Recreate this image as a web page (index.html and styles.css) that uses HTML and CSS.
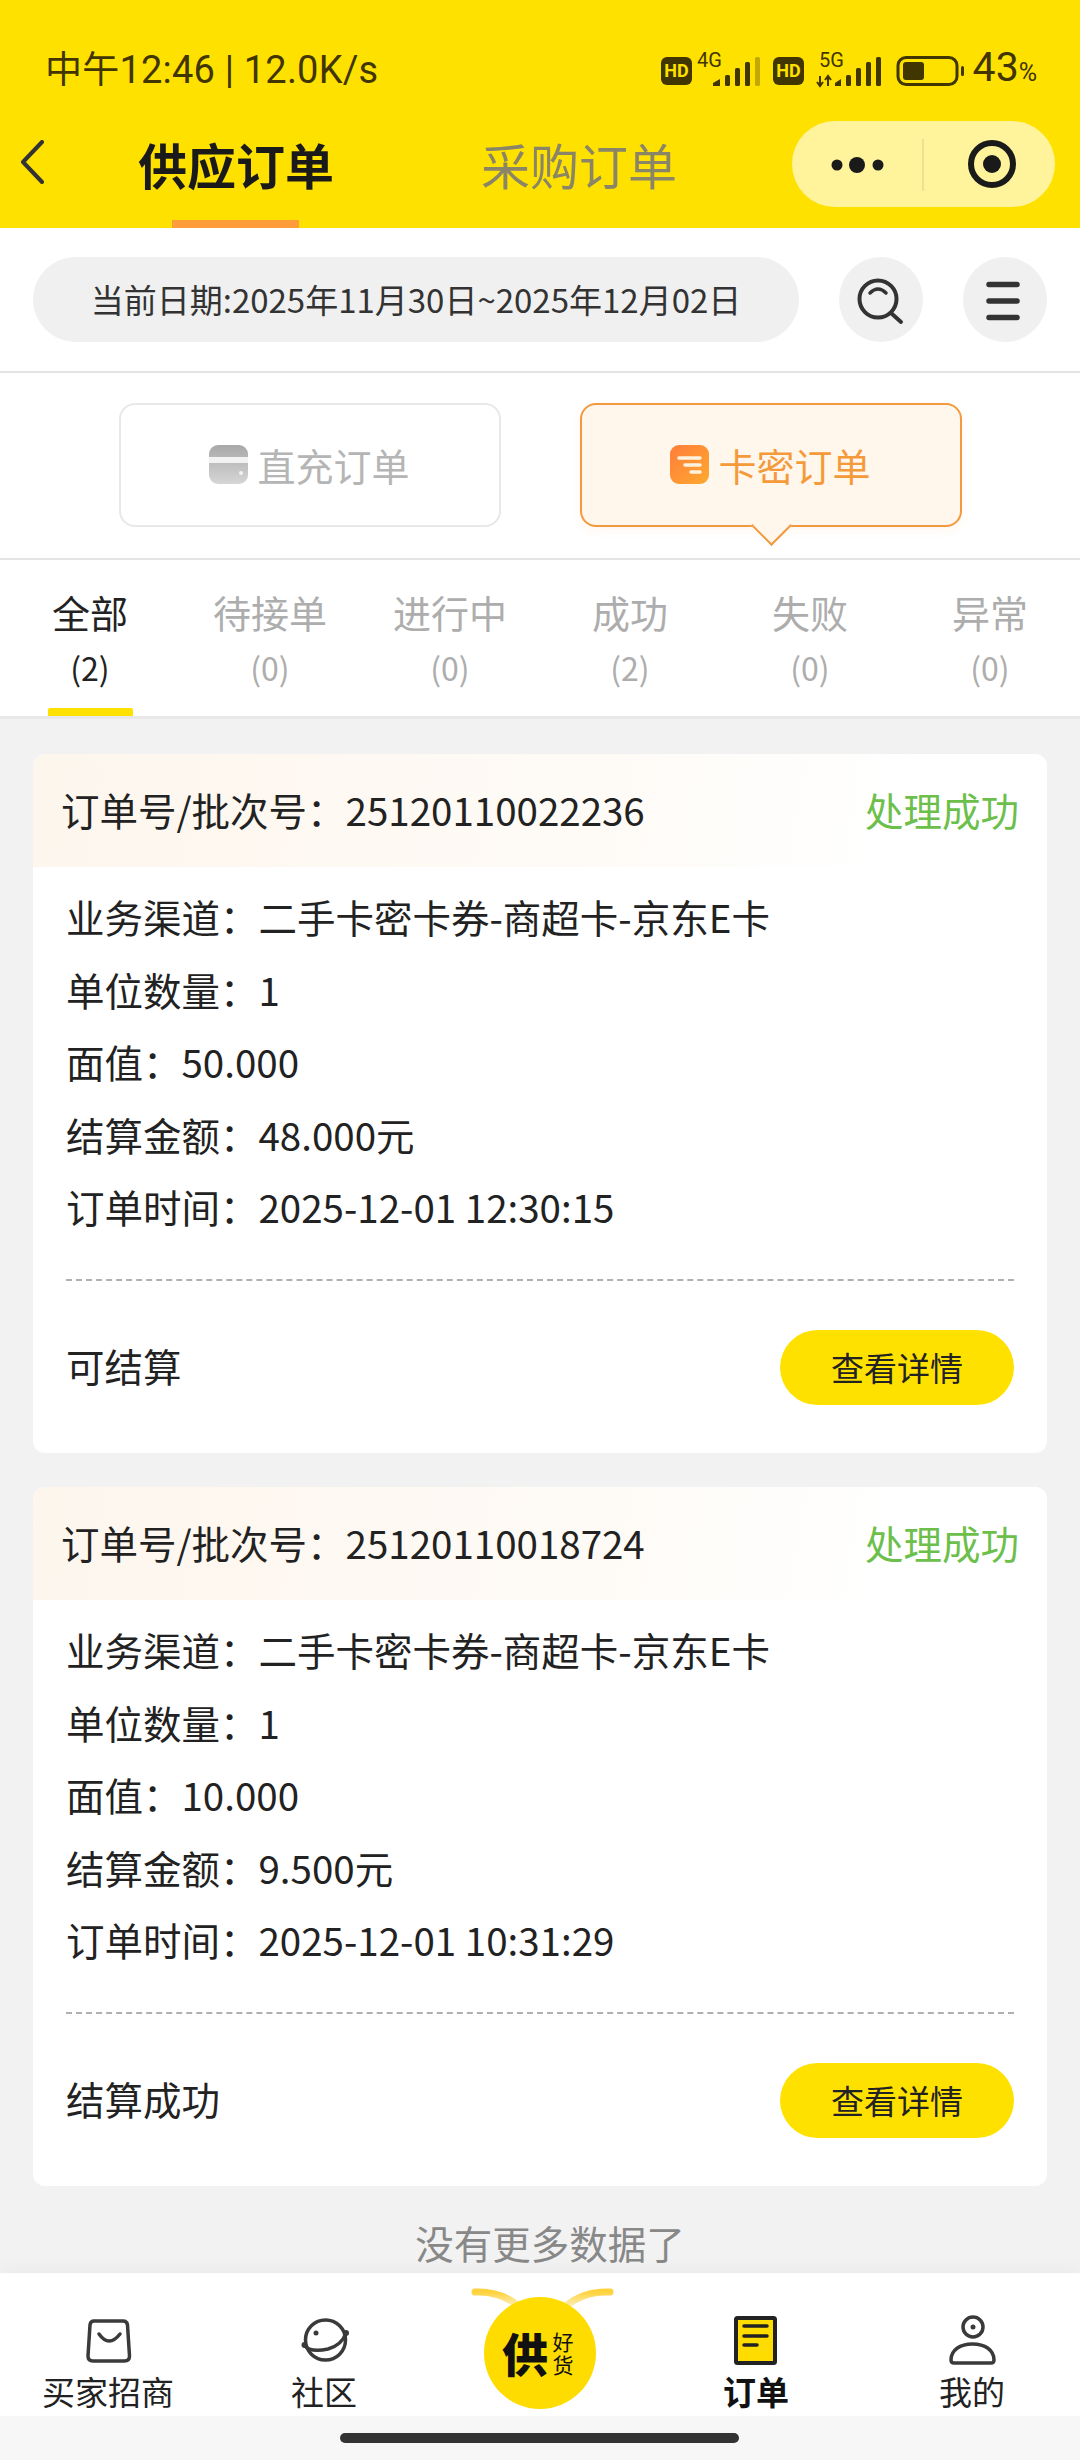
FILE: index.html
```html
<!DOCTYPE html>
<html lang="zh-CN">
<head>
  <meta charset="UTF-8">
  <meta name="viewport" content="width=device-width, initial-scale=1.0">
  <title>供应订单</title>
  <link rel="stylesheet" href="styles.css">
</head>
<body>
  <header class="top">
    <div class="statusbar">
      <span class="clock"><span class="clock-cn">中午</span>12:46 | 12.0K/s</span>
      <div class="status-right">
        <svg class="signal" viewBox="660 42 306 44" width="306" height="44">
          <rect x="661" y="54" width="31" height="28" rx="6" fill="#413500"/>
          <text x="676.5" y="74" class="hd">HD</text>
          <text x="697" y="64" class="net">4G</text>
          <path d="M713 83v-3l7-4v7z" fill="#413500"/>
          <rect x="725" y="72" width="5" height="11" rx="1.5" fill="#413500"/>
          <rect x="735" y="65" width="5" height="18" rx="1.5" fill="#413500"/>
          <rect x="745" y="59" width="5" height="24" rx="1.5" fill="#413500"/>
          <rect x="755" y="54" width="5" height="29" rx="1.5" fill="#c4a800"/>
          <rect x="773" y="54" width="31" height="28" rx="6" fill="#413500"/>
          <text x="788.5" y="74" class="hd">HD</text>
          <text x="819" y="64" class="net">5G</text>
          <path d="M820 73v10M817 79l3 4 3-4M828 83V73M825 77l3-4 3 4" stroke="#413500" stroke-width="2" fill="none"/>
          <path d="M835 83v-3l6-4v7z" fill="#413500"/>
          <rect x="846" y="72" width="5" height="11" rx="1.5" fill="#413500"/>
          <rect x="856" y="65" width="5" height="18" rx="1.5" fill="#413500"/>
          <rect x="866" y="59" width="5" height="24" rx="1.5" fill="#413500"/>
          <rect x="876" y="54" width="5" height="29" rx="1.5" fill="#413500"/>
          <rect x="898" y="54.500" width="59" height="27" rx="8" fill="none" stroke="#413500" stroke-width="3"/>
          <rect x="903" y="59" width="21" height="18" rx="3" fill="#413500"/>
          <rect x="961" y="63" width="3" height="10" rx="1.500" fill="#413500"/>
        </svg>
        <span class="battery">43<small>%</small></span>
      </div>
    </div>
    <nav class="navbar">
      <svg class="back" viewBox="0 0 26 44" width="26" height="44">
        <path d="M23 2L4 22l19 20" fill="none" stroke="#333" stroke-width="4" stroke-linecap="round" stroke-linejoin="round"/>
      </svg>
      <div class="nav-tabs">
        <a class="nav-tab active">供应订单</a>
        <a class="nav-tab">采购订单</a>
      </div>
      <div class="capsule">
        <svg viewBox="0 0 262 86" width="262" height="86">
          <circle cx="45" cy="44" r="5.500" fill="#1a1a1a"/>
          <circle cx="65" cy="44" r="8" fill="#1a1a1a"/>
          <circle cx="86" cy="44" r="5.500" fill="#1a1a1a"/>
          <path d="M131 18v52" stroke="#e8dc8c" stroke-width="1.500"/>
          <circle cx="200" cy="43" r="21" fill="none" stroke="#1a1a1a" stroke-width="6"/>
          <circle cx="200" cy="43" r="9" fill="#1a1a1a"/>
        </svg>
      </div>
    </nav>
  </header>

  <section class="search">
    <div class="date-pill">当前日期:2025年11月30日~2025年12月02日</div>
    <button class="round-btn">
      <svg viewBox="0 0 84 84" width="84" height="84">
        <circle cx="39" cy="41" r="18.500" fill="none" stroke="#333" stroke-width="4"/>
        <path d="M31 35q8-8 16 0" fill="none" stroke="#333" stroke-width="3.500" stroke-linecap="round"/>
        <path d="M52 55l10 9" fill="none" stroke="#333" stroke-width="4" stroke-linecap="round"/>
      </svg>
    </button>
    <button class="round-btn">
      <svg viewBox="0 0 84 84" width="84" height="84">
        <path d="M26 26.500h28M26 43h28M26 59.500h28" fill="none" stroke="#333" stroke-width="5.500" stroke-linecap="round"/>
      </svg>
    </button>
  </section>

  <section class="type-tabs">
    <div class="type-tab">
      <svg viewBox="0 0 39 39" width="39" height="39">
        <defs>
          <linearGradient id="greyCard" x1="0" y1="0" x2="0" y2="1">
            <stop offset="0" stop-color="#a8a8a8"/>
            <stop offset="1" stop-color="#d6d6d6"/>
          </linearGradient>
        </defs>
        <rect width="39" height="39" rx="9" fill="url(#greyCard)"/>
        <rect y="12" width="39" height="6" fill="#f2f2f2"/>
        <circle cx="32" cy="28" r="2" fill="#f2f2f2"/>
      </svg>
      <span>直充订单</span>
    </div>
    <div class="type-tab active">
      <svg viewBox="0 0 39 39" width="39" height="39">
        <defs>
          <linearGradient id="orangeCard" x1="0" y1="0" x2="1" y2="1">
            <stop offset="0" stop-color="#ff7d3c"/>
            <stop offset="1" stop-color="#ffa92e"/>
          </linearGradient>
        </defs>
        <rect width="39" height="39" rx="9" fill="url(#orangeCard)"/>
        <path d="M9 13h21M15 20h15M21 27h9" stroke="#fff3df" stroke-width="3.500" stroke-linecap="round"/>
      </svg>
      <span>卡密订单</span>
    </div>
  </section>

  <section class="status-tabs">
    <div class="status-tab active"><span>全部</span><span class="count">(2)</span><i></i></div>
    <div class="status-tab"><span>待接单</span><span class="count">(0)</span><i></i></div>
    <div class="status-tab"><span>进行中</span><span class="count">(0)</span><i></i></div>
    <div class="status-tab"><span>成功</span><span class="count">(2)</span><i></i></div>
    <div class="status-tab"><span>失败</span><span class="count">(0)</span><i></i></div>
    <div class="status-tab"><span>异常</span><span class="count">(0)</span><i></i></div>
  </section>

  <main class="list">
    <article class="card">
      <div class="card-head">
        <span>订单号/批次号：25120110022236</span>
        <span class="state">处理成功</span>
      </div>
      <div class="card-body">
        <p>业务渠道：二手卡密卡券-商超卡-京东E卡</p>
        <p>单位数量：1</p>
        <p>面值：50.000</p>
        <p>结算金额：48.000元</p>
        <p>订单时间：2025-12-01 12:30:15</p>
      </div>
      <div class="card-foot">
        <span class="settle">可结算</span>
        <button class="detail-btn">查看详情</button>
      </div>
    </article>

    <article class="card">
      <div class="card-head">
        <span>订单号/批次号：25120110018724</span>
        <span class="state">处理成功</span>
      </div>
      <div class="card-body">
        <p>业务渠道：二手卡密卡券-商超卡-京东E卡</p>
        <p>单位数量：1</p>
        <p>面值：10.000</p>
        <p>结算金额：9.500元</p>
        <p>订单时间：2025-12-01 10:31:29</p>
      </div>
      <div class="card-foot">
        <span class="settle">结算成功</span>
        <button class="detail-btn">查看详情</button>
      </div>
    </article>

    <div class="no-more">没有更多数据了</div>
  </main>

  <footer class="tabbar">
    <a class="tab-item">
      <svg viewBox="0 0 56 56" width="56" height="56">
        <path d="M14 9h29q4 0 4.500 4l2 31q0 5-5 5H13q-5 0-5-5l2-31q.5-4 4-4z" fill="none" stroke="#3a3a3a" stroke-width="3.500"/>
        <path d="M19 22q10 14 21 0" fill="none" stroke="#3a3a3a" stroke-width="3.500" stroke-linecap="round"/>
      </svg>
      <span>买家招商</span>
    </a>
    <a class="tab-item">
      <svg viewBox="0 0 56 56" width="56" height="56">
        <circle cx="29.500" cy="28" r="20" fill="none" stroke="#3a3a3a" stroke-width="3.500"/>
        <path d="M8 33Q14 41 32 37Q46 33 50 21" fill="none" stroke="#3a3a3a" stroke-width="3.500"/>
        <circle cx="8.500" cy="33" r="3" fill="#3a3a3a"/>
        <circle cx="50" cy="21" r="3" fill="#3a3a3a"/>
        <circle cx="20" cy="21" r="2.500" fill="#3a3a3a"/>
      </svg>
      <span>社区</span>
    </a>
    <a class="tab-item logo-item">
      <svg viewBox="0 0 150 132" width="150" height="132">
        <defs>
          <linearGradient id="antenna" x1="0" y1="0" x2="0" y2="1">
            <stop offset="0" stop-color="#ffd23c"/>
            <stop offset="1" stop-color="#fbefb8"/>
          </linearGradient>
        </defs>
        <path d="M10 10q26-1 43 14" fill="none" stroke="url(#antenna)" stroke-width="7" stroke-linecap="round"/>
        <path d="M145 10q-26-1-44 14" fill="none" stroke="url(#antenna)" stroke-width="7" stroke-linecap="round"/>
        <circle cx="75" cy="71" r="56" fill="#ffdc00"/>
        <text x="37" y="90" class="logo-big">供</text>
        <text x="98" y="50" class="logo-small">好货</text>
      </svg>
    </a>
    <a class="tab-item active">
      <svg viewBox="0 0 56 56" width="56" height="56">
        <rect x="8" y="6" width="39" height="45" rx="1.500" fill="#ffdc00" stroke="#222" stroke-width="4"/>
        <path d="M16 14h23M16 24h23M16 33h13" stroke="#222" stroke-width="3.500" stroke-linecap="round"/>
      </svg>
      <span>订单</span>
    </a>
    <a class="tab-item">
      <svg viewBox="0 0 56 56" width="56" height="56">
        <circle cx="29" cy="15" r="10" fill="none" stroke="#3a3a3a" stroke-width="3.500"/>
        <circle cx="29" cy="15" r="2.500" fill="#3a3a3a"/>
        <path d="M7 48c0-10 9-16 21.500-16s21.500 6 21.500 16q0 3-3 3H10q-3 0-3-3z" fill="none" stroke="#3a3a3a" stroke-width="3.500"/>
      </svg>
      <span>我的</span>
    </a>
  </footer>

  <div class="home-area"><div class="home-bar"></div></div>
</body>
</html>
```
FILE: styles.css
```css
* { margin: 0; padding: 0; box-sizing: border-box; }

html, body { width: 1080px; height: 2460px; overflow: hidden; }

body {
  display: flex;
  flex-direction: column;
  font-family: "Noto Sans CJK SC", "Noto Sans", sans-serif;
  background: #f2f2f2;
  color: #222;
}

button { font-family: inherit; border: none; cursor: pointer; }

/* top yellow header */
.top { background: #ffe100; height: 228px; }

.statusbar {
  height: 82px;
  margin-top: 26px;
  padding: 0 43px 0 45px;
  display: flex;
  justify-content: space-between;
  align-items: center;
  color: #413500;
}

.clock { font: 38px Roboto, "Noto Sans CJK SC", sans-serif; letter-spacing: 0.2px; }
.clock-cn { font-size: 37px; }

.status-right { display: flex; align-items: center; }
.signal { display: block; margin-right: 7px; }
.hd { font: bold 18px Roboto, sans-serif; fill: #ffe100; text-anchor: middle; }
.net { font: 20px Roboto, sans-serif; fill: #413500; }
.battery { font: 41px Roboto, sans-serif; }
.battery small { font-size: 25px; }

.navbar {
  height: 120px;
  padding-left: 19px;
  display: flex;
  align-items: flex-start;
}

.back { margin-top: 32px; flex: none; }

.nav-tabs {
  height: 120px;
  margin-left: 93px;
  display: flex;
  gap: 147px;
}

.nav-tab {
  position: relative;
  font-size: 49px;
  line-height: 112px;
  color: #8a8566;
}

.nav-tab.active { color: #1a1a1a; font-weight: bold; }

.nav-tab.active::after {
  content: "";
  position: absolute;
  left: 34px;
  bottom: 0;
  width: 127px;
  height: 8px;
  background: #ff9c3a;
}

.capsule {
  margin: 13px 25px 0 auto;
  width: 263px;
  height: 86px;
  border-radius: 43px;
  background: #fff39c;
}

.capsule svg { display: block; }

/* date search */
.search {
  background: #fff;
  height: 145px;
  padding: 29px 33px 29px 33px;
  border-bottom: 2px solid #e4e4e4;
  display: flex;
  gap: 40px;
}

.date-pill {
  flex: 1;
  border-radius: 43px;
  background: #f0f0f0;
  font-size: 33px;
  line-height: 85px;
  text-align: center;
  color: #333;
}

.round-btn {
  width: 84px;
  height: 85px;
  border-radius: 50%;
  background: #f0f0f0;
}

.round-btn svg { display: block; }

/* recharge / card type */
.type-tabs {
  background: #fff;
  height: 187px;
  padding-top: 30px;
  border-bottom: 2px solid #e4e4e4;
  display: flex;
  justify-content: center;
  gap: 79px;
}

.type-tab {
  position: relative;
  width: 382px;
  height: 124px;
  padding-bottom: 2px;
  border: 2px solid #e8e8e8;
  border-radius: 16px;
  display: flex;
  justify-content: center;
  align-items: center;
  gap: 9px;
  font-size: 38px;
  color: #b5b5b5;
}

.type-tab.active {
  background: #fff6ec;
  border-color: #f4993f;
  color: #f59a3b;
  box-shadow: 0 4px 10px rgba(244, 153, 63, 0.08);
}

.type-tab.active::after {
  content: "";
  position: absolute;
  left: 175px;
  bottom: -15px;
  width: 27px;
  height: 27px;
  background: #fff6ec;
  border-right: 2px solid #f4993f;
  border-bottom: 2px solid #f4993f;
  transform: rotate(45deg);
}

/* order status */
.status-tabs {
  background: #fff;
  height: 159px;
  padding-top: 25px;
  border-bottom: 3px solid #e8e8e8;
  display: grid;
  grid-template-columns: repeat(6, 180px);
}

.status-tab {
  display: flex;
  flex-direction: column;
  align-items: center;
  font-size: 38px;
  line-height: 54px;
  color: #adadad;
}

.status-tab .count { font-size: 32px; line-height: 57px; }
.status-tab i { width: 85px; height: 8px; margin-top: 12px; border-radius: 2px 2px 0 0; }
.status-tab.active { color: #222; }
.status-tab.active i { background: #ffe100; }

/* order list */
.list {
  flex: 1;
  min-height: 0;
  overflow: hidden;
  padding: 35px 33px 0;
}

.card {
  height: 699px;
  margin-bottom: 34px;
  background: #fff;
  border-radius: 12px;
  overflow: hidden;
}

.card-head {
  height: 113px;
  padding: 0 28px 4px 28px;
  display: flex;
  justify-content: space-between;
  align-items: center;
  font-size: 38.5px;
  background: linear-gradient(100deg, #fdf6ed 0%, #fefaf5 50%, #fff 85%);
}

.state { color: #6cbf4b; }

.card-body {
  margin: 0 33px;
  padding: 13px 0 36px;
  border-bottom: 2px dashed #b0b0b0;
}

.card-body p { font-size: 38.5px; line-height: 72.5px; }

.card-foot {
  margin: 0 33px;
  padding-top: 49px;
  display: flex;
  justify-content: space-between;
  align-items: center;
  font-size: 38.5px;
}

.settle { padding-bottom: 4px; }

.detail-btn {
  width: 234px;
  height: 75px;
  border-radius: 38px;
  background: #ffe100;
  font-size: 33px;
  color: #222;
}

.no-more {
  margin-top: -5px;
  padding-left: 20px;
  text-align: center;
  font-size: 38.5px;
  line-height: 54px;
  color: #888;
}

/* bottom tabs */
.tabbar {
  flex: none;
  height: 143px;
  background: #fff;
  box-shadow: 0 -8px 12px rgba(0, 0, 0, 0.025);
  display: grid;
  grid-template-columns: repeat(5, 216px);
}

.tab-item {
  padding-top: 39px;
  display: flex;
  flex-direction: column;
  align-items: center;
  font-size: 33px;
  line-height: 46px;
  color: #222;
}

.tab-item svg { display: block; flex: none; }
.tab-item.active { font-weight: bold; color: #111; }
.logo-item { padding-top: 9px; }

.logo-big { font-size: 46px; font-weight: 900; fill: #111; }
.logo-small { font-size: 21px; letter-spacing: 2px; writing-mode: vertical-rl; fill: #111; }

.home-area {
  flex: none;
  height: 44px;
  padding-top: 17px;
  background: #f7f7f7;
}

.home-bar {
  width: 399px;
  height: 10px;
  margin-left: 340px;
  border-radius: 5px;
  background: #333;
}
```
